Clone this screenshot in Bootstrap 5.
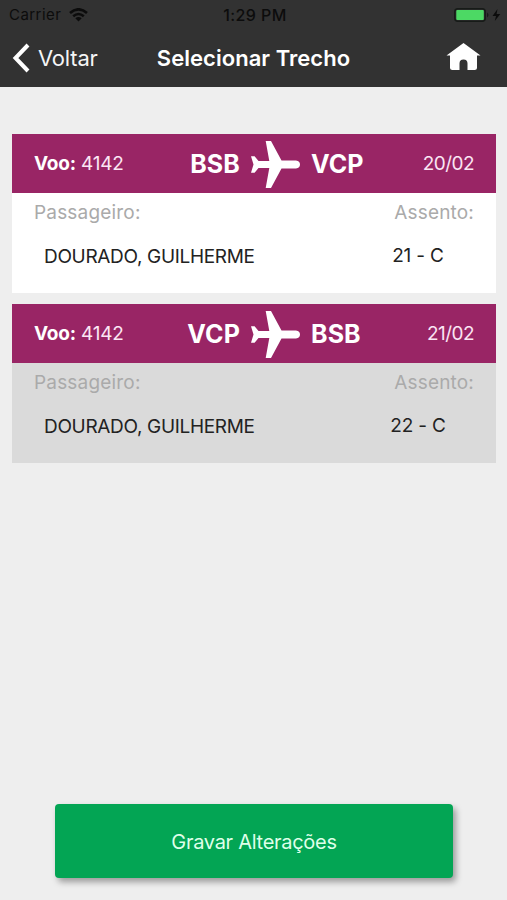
<!DOCTYPE html>
<html lang="pt-BR">
<head>
<meta charset="utf-8">
<meta name="viewport" content="width=device-width, initial-scale=1">
<title>Selecionar Trecho</title>
<link href="https://cdn.jsdelivr.net/npm/bootstrap@5.3.0/dist/css/bootstrap.min.css" rel="stylesheet">
<style>
body { background: #eeeeee; font-family: Inter, "Liberation Sans", sans-serif; color: #222; height: 900px; overflow: hidden; }
.app-header { background: #323232; height: 87px; flex: none; }
.status { height: 29px; color: #0c0c0c; font-size: 15px; line-height: 29px; padding: 0 6px 0 9px; }
.status > div, .title-bar > div { flex: 1 1 0; }
.status .clock, .title-bar .screen-title { flex: none; }
.carrier { letter-spacing: .45px; }
.clock { font-size: 16px; font-weight: 500; letter-spacing: .4px; padding-top: 1px; }
.title-bar { height: 58px; padding: 0 26px 0 12px; color: #fff; }
.back { font-size: 22px; letter-spacing: -.2px; color: #f5f5f5; }
.screen-title { font-size: 22px; font-weight: 600; letter-spacing: .04px; padding-left: 14px; }
.trips { padding: 47px 11px 0 12px; gap: 11px; }
.trip { background: #fff; height: 159px; }
.trip.dim { background: #dadada; }
.trip-head { background: #992565; color: #fff; height: 59px; padding: 2px 22px 0; font-size: 19px; }
.trip-head > div { flex: 1 1 0; color: #fbe6f4; }
.trip-head .route { flex: none; color: #fff; font-size: 25px; font-weight: 700; gap: 11px; padding-left: 43px; letter-spacing: .1px; }
.route span { width: 51px; white-space: nowrap; display: flex; }
.route span:first-child { justify-content: flex-end; }
.voo { color: #fff; }
.flight { letter-spacing: -.2px; }
.date { letter-spacing: -.55px; }
.labels { color: #aaa; font-size: 19px; line-height: 24px; padding: 8px 22px 0; letter-spacing: .18px; }
.values { font-size: 19px; line-height: 24px; padding: 20px 50px 0 32px; }
.passenger { letter-spacing: -.32px; }
.seat { width: 56px; margin-top: -1px; white-space: nowrap; letter-spacing: -.15px; }
.save { width: 398px; height: 74px; margin: 0 0 22px 55px; padding-top: 8px; background: #03a554; color: #dfffe9; border: 0; border-radius: 4px; font-size: 20px; letter-spacing: -.28px; box-shadow: 3px 4px 6px rgba(0,0,0,.35); }
svg { display: block; flex: none; }
</style>
</head>
<body class="d-flex flex-column">
<header class="app-header">
  <div class="status d-flex align-items-center">
    <div class="d-flex align-items-center gap-2"><span class="carrier">Carrier</span>
      <svg width="19" height="14" viewBox="0 0 19 14" fill="none" stroke="#0c0c0c" stroke-width="2.6"><path d="M1 5Q9.500-2.400 18 5M4.200 8.200Q9.500 3.800 14.800 8.200"/><path d="M6.300 10.300Q9.500 7.800 12.700 10.300L9.500 13.500Z" fill="#0c0c0c" stroke="none"/></svg>
    </div>
    <div class="clock">1:29 PM</div>
    <div class="d-flex justify-content-end">
      <svg width="47" height="14" viewBox="0 0 47 14"><rect x=".8" y=".8" width="30.400" height="12.400" rx="3" fill="#323232" stroke="#171b18" stroke-width="1.500"/><rect x="2.300" y="2" width="27.500" height="10" rx="1" fill="#4cd964"/><path d="M33 4.500Q36 7 33 9.500Z" fill="#171b18"/><path d="M43.500 1L38.500 8H42L40.800 13L46.300 6H42.600Z" fill="#0c0c0c"/></svg>
    </div>
  </div>
  <div class="title-bar d-flex align-items-center">
    <div class="back d-flex align-items-center">
      <svg width="26" height="30" viewBox="0 0 26 30" fill="none" stroke="#fff" stroke-width="4"><path d="M16 2L3.500 15L16 28"/></svg>
      <span>Voltar</span>
    </div>
    <div class="screen-title">Selecionar Trecho</div>
    <div class="d-flex justify-content-end">
      <svg width="35" height="30" viewBox="0 -1 35 30" fill="#fff"><path d="M17.500-1L34.500 11.500H31V23.500Q31 26 28.500 26H21.500V19.500Q21.500 15.500 17.500 15.500T13.500 19.500V26H6.500Q4 26 4 23.500V11.500H.5Z"/></svg>
    </div>
  </div>
</header>
<main class="trips d-flex flex-column">
  <section class="trip">
    <div class="trip-head d-flex align-items-center">
      <div class="flight"><b class="voo">Voo:</b> 4142</div>
      <div class="route d-flex align-items-center"><span>BSB</span>
        <svg width="49" height="47" viewBox="0 0 49 47" fill="#fff"><path d="M0 15.200H3.600L7.500 20H18.300L14.700 0H20L30.500 19.500H45Q49 20 49 23.500T45 27.500H30.500L20 47H14.700L18.300 27H7.500L3.600 31.800H0L2.500 23.500Z"/></svg>
        <span>VCP</span></div>
      <div class="date text-end">20/02</div>
    </div>
    <div class="labels d-flex justify-content-between"><span>Passageiro:</span><span>Assento:</span></div>
    <div class="values d-flex justify-content-between"><span class="passenger">DOURADO, GUILHERME</span><span class="seat text-center">21 - C</span></div>
  </section>
  <section class="trip dim">
    <div class="trip-head d-flex align-items-center">
      <div class="flight"><b class="voo">Voo:</b> 4142</div>
      <div class="route d-flex align-items-center"><span>VCP</span>
        <svg width="49" height="47" viewBox="0 0 49 47" fill="#fff"><path d="M0 15.200H3.600L7.500 20H18.300L14.700 0H20L30.500 19.500H45Q49 20 49 23.500T45 27.500H30.500L20 47H14.700L18.300 27H7.500L3.600 31.800H0L2.500 23.500Z"/></svg>
        <span>BSB</span></div>
      <div class="date text-end">21/02</div>
    </div>
    <div class="labels d-flex justify-content-between"><span>Passageiro:</span><span>Assento:</span></div>
    <div class="values d-flex justify-content-between"><span class="passenger">DOURADO, GUILHERME</span><span class="seat text-center">22 - C</span></div>
  </section>
</main>
<button type="button" class="save btn mt-auto">Gravar Alterações</button>
<script src="https://cdn.jsdelivr.net/npm/bootstrap@5.3.0/dist/js/bootstrap.bundle.min.js"></script>
</body>
</html>
